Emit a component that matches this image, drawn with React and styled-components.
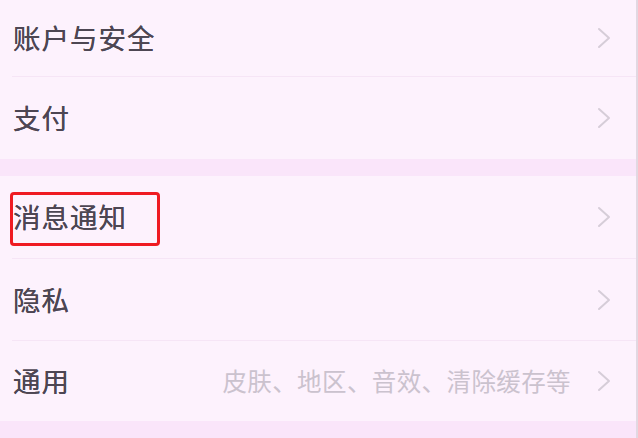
import React from "react"
import styled, { createGlobalStyle } from "styled-components"

const GlobalStyle = createGlobalStyle`
  html, body {
    margin: 0;
    padding: 0;
    background: #fdf2fd;
  }
  body {
    font-family: "Noto Sans CJK SC", "Noto Sans", sans-serif;
  }
`

const Page = styled.div`
  width: 638px;
  height: 438px;
  overflow: hidden;
  box-sizing: border-box;
  background: #fdf2fd;
  border-right: 2px solid #e2d8e2;
`

const Group = styled.div`
  display: flex;
  flex-direction: column;
`

const Band = styled.div`
  height: 17px;
  background: #fae5fa;
`

const Row = styled.div`
  position: relative;
  display: flex;
  align-items: center;
  height: ${(p) => p.$h}px;
  box-sizing: border-box;
  margin-left: 12px;
  padding: 0 25px 0 1px;
  border-bottom: ${(p) => (p.$last ? "none" : "1px solid #f6e5f6")};
`

const Label = styled.span`
  flex: 1;
  font-size: 27.5px;
  color: #4d4653;
  letter-spacing: 1px;
  line-height: 1;
  text-shadow: 0 0 0.6px #4d4653;
`

const Hint = styled.span`
  font-size: 24.5px;
  color: #cbc2ce;
  margin-right: 26px;
  letter-spacing: 0.4px;
  line-height: 1;
`

const Chevron = styled.svg`
  width: 14px;
  height: 22px;
  flex-shrink: 0;
`

const Highlight = styled.div`
  position: absolute;
  left: -2px;
  top: 16px;
  width: 150px;
  height: 54px;
  box-sizing: border-box;
  border: 3px solid #ef1b22;
  border-radius: 4px;
  pointer-events: none;
`

const Arrow = () => (
  <Chevron viewBox="0 0 14 22">
    <polyline
      points="2,2 12,11 2,20"
      fill="none"
      stroke="#d6cdd8"
      strokeWidth="2"
      strokeLinecap="round"
      strokeLinejoin="round"
    />
  </Chevron>
)

const groups = [
  [
    { label: "账户与安全", h: 77 },
    { label: "支付", h: 82 },
  ],
  [
    { label: "消息通知", h: 83, marked: true },
    { label: "隐私", h: 82 },
    { label: "通用", h: 80, hint: "皮肤、地区、音效、清除缓存等" },
  ],
]

const App = () => {
  return (
    <>
      <GlobalStyle />
      <Page>
        {groups.map((rows, gi) => (
          <React.Fragment key={gi}>
            <Group>
              {rows.map((row, i) => (
                <Row key={row.label} $h={row.h} $last={i === rows.length - 1}>
                  <Label>{row.label}</Label>
                  {row.hint && <Hint>{row.hint}</Hint>}
                  <Arrow />
                  {row.marked && <Highlight />}
                </Row>
              ))}
            </Group>
            <Band />
          </React.Fragment>
        ))}
      </Page>
    </>
  )
}

export default App
